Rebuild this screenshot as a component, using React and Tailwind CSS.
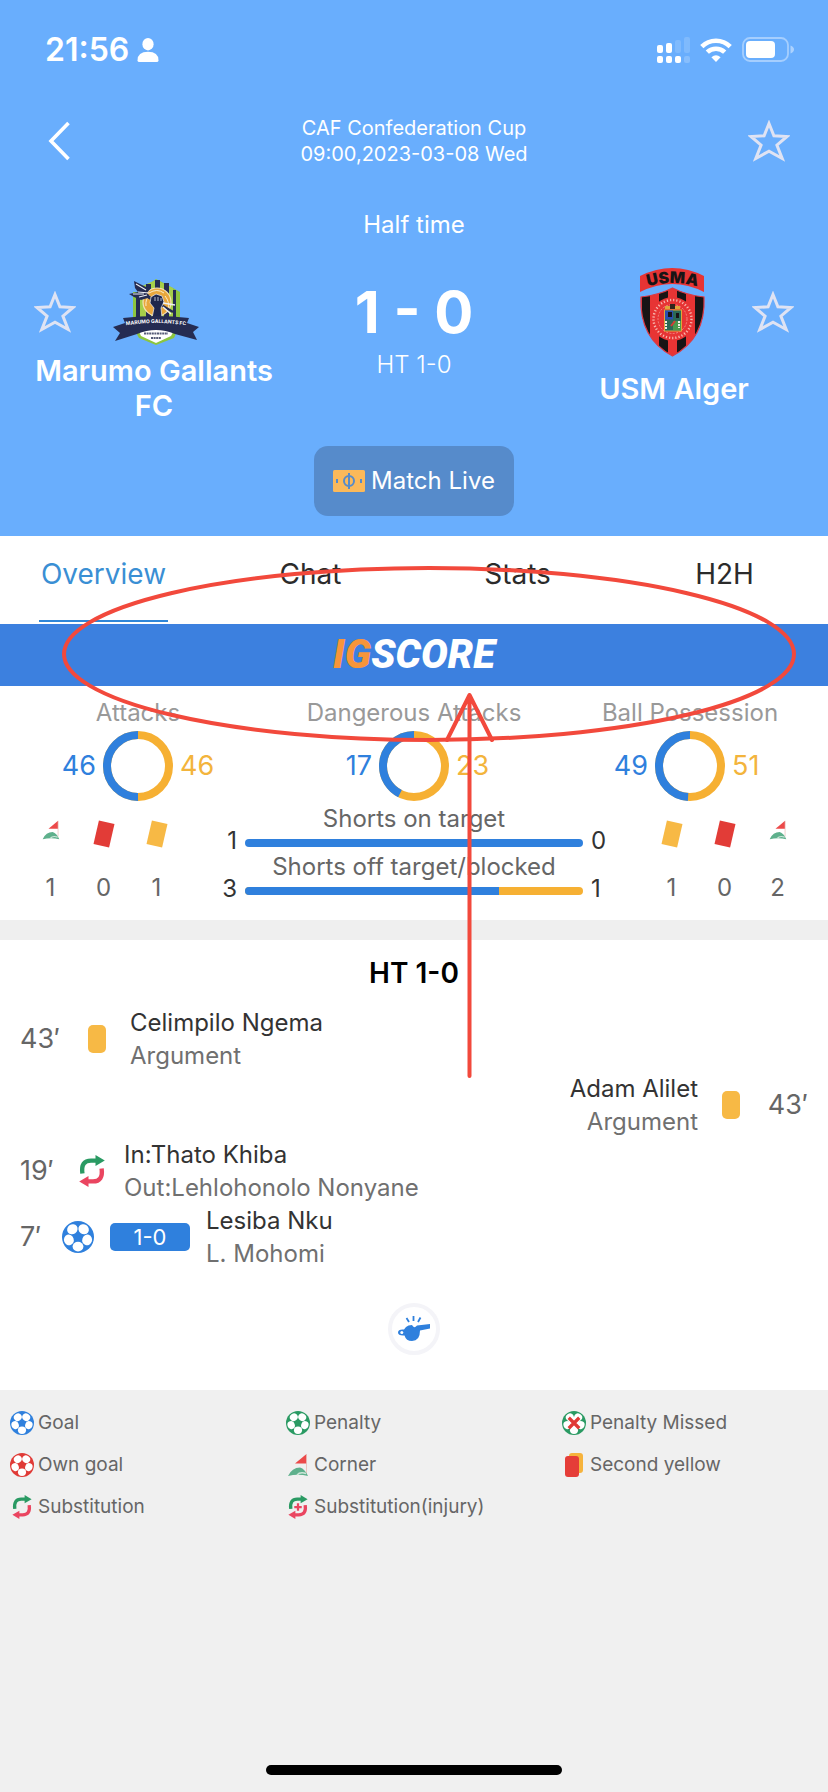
import React from "react";

const legend = [
  { icon: <Ball color="#2f80dd" />, label: "Goal" },
  { icon: <Ball color="#2a9a63" />, label: "Penalty" },
  { icon: <Ball color="#2a9a63" missed />, label: "Penalty Missed" },
  { icon: <Ball color="#e03a36" />, label: "Own goal" },
  { icon: <CornerFlag />, label: "Corner" },
  { icon: <SecondYellow />, label: "Second yellow" },
  { icon: <Substitution />, label: "Substitution" },
  { icon: <Substitution injury />, label: "Substitution(injury)" },
];

function Ball({ color, missed = false }) {
  return (
    <svg viewBox="0 0 32 32" className="h-full w-full" aria-hidden="true">
      <circle cx="16" cy="16" r="16" fill={color} />
      {[18, 90, 162, 234, 306].map((angle) => (
        <ellipse key={angle} cx="25.600" cy="16" rx="4.900" ry="5.400" fill="#fff" transform={`rotate(${angle} 16 16)`} />
      ))}
      {missed && (
        <>
          <circle cx="16" cy="16" r="8" fill="#fff" />
          <path d="M9 9 L23 23 M23 9 L9 23" stroke="#e03a36" strokeWidth="4.4" />
        </>
      )}
    </svg>
  );
}

function Substitution({ injury = false }) {
  return (
    <svg viewBox="0 0 32 32" className="h-full w-full" aria-hidden="true">
      <path d="M6.400 18.500 Q4.600 5.600 15 5.600 H20.500" fill="none" stroke="#2a9a63" strokeWidth="4.400" />
      <path d="M19.500 0 L28.800 5.600 L19.500 11 Z" fill="#2a9a63" />
      <path d="M25.600 13.500 Q27.400 26.400 17 26.400 H11.500" fill="none" stroke="#ea4560" strokeWidth="4.400" />
      <path d="M12.500 21 L3.200 26.400 L12.500 32 Z" fill="#ea4560" />
      {injury && <path d="M16 11 V21 M11 16 H21" stroke="#ea4560" strokeWidth="3" />}
    </svg>
  );
}

function CornerFlag() {
  return (
    <svg viewBox="0 0 24 24" className="h-full w-full" aria-hidden="true">
      <path d="M20.500 1 V10.500 H9 Z" fill="#ec4a4a" />
      <path d="M20.500 1 V20" stroke="#e9b9b4" strokeWidth="0.800" />
      <path d="M2 23 Q6 14.500 14 14.500 Q19 16 22 23 Q12 20.500 2 23 Z" fill="#5eb08c" />
      <path d="M11 22 Q14 18.500 20 20.500" fill="none" stroke="#cfe6da" strokeWidth="1.400" />
    </svg>
  );
}

function SecondYellow() {
  return (
    <svg viewBox="0 0 24 24" className="h-full w-full" aria-hidden="true">
      <rect x="7" y="0" width="14" height="20" rx="3" fill="#f6b33c" />
      <rect x="3" y="3" width="14" height="21" rx="3" fill="#e53d38" />
    </svg>
  );
}

function Star() {
  return (
    <svg viewBox="0 0 42 42" className="size-[42px]" aria-hidden="true">
      <path
        d="M21 3.500 L25.900 15.800 L39 16.500 L28.900 25.100 L34.200 38.500 L21 31.200 L7.800 38.500 L13.100 25.100 L3 16.500 L16.100 15.800 Z"
        fill="none"
        stroke="#dfe3f3"
        strokeWidth="3"
      />
    </svg>
  );
}

function StatusBar() {
  return (
    <div className="flex h-[100px] items-center justify-between pr-[34px] pl-[45px]">
      <div className="flex items-center gap-2 text-[32px] leading-9 font-semibold">
        <span>21:56</span>
        <svg viewBox="0 0 22 24" className="h-6 w-[22px]" fill="#fff" aria-hidden="true">
          <ellipse cx="11" cy="6.2" rx="5.6" ry="6.2" />
          <path d="M0.5 22.5 Q0.5 13.8 11 13.8 Q21.5 13.8 21.5 22.5 Q21.5 24 19.5 24 H2.5 Q0.5 24 0.5 22.5 Z" />
        </svg>
      </div>
      <div className="flex items-center gap-[10px]">
        <svg viewBox="0 0 34 28" className="h-7 w-[34px]" fill="#fff" aria-hidden="true">
          <rect x="1" y="9" width="6" height="8" rx="2" />
          <rect x="10" y="7" width="6" height="10" rx="2" />
          <rect x="19" y="4" width="6" height="13" rx="2" opacity="0.15" />
          <rect x="28" y="1" width="6" height="16" rx="2" opacity="0.15" />
          <rect x="1" y="20" width="6" height="7" rx="2" />
          <rect x="10" y="20" width="6" height="7" rx="2" />
          <rect x="19" y="20" width="6" height="7" rx="2" />
          <rect x="28" y="20" width="6" height="7" rx="2" opacity="0.2" />
        </svg>
        <svg viewBox="0 0 32 24" className="h-6 w-8" aria-hidden="true">
          <g fill="none" stroke="#fff" strokeWidth="4.6">
            <path d="M1.8 8.6 A20 20 0 0 1 30.2 8.6" />
            <path d="M7.3 14.2 A12.5 12.5 0 0 1 24.7 14.2" />
          </g>
          <path d="M16 24 L11.4 19.3 Q16 15.2 20.6 19.3 Z" fill="#fff" />
        </svg>
        <svg viewBox="0 0 52 26" className="h-[26px] w-[52px]" aria-hidden="true">
          <rect x="1" y="1" width="45" height="23" rx="7" fill="none" stroke="#fff" strokeWidth="1.8" opacity="0.4" />
          <rect x="4" y="4" width="29" height="17" rx="4" fill="#fff" />
          <path d="M48.5 8.5 Q52 10 52 12.5 Q52 15 48.5 16.5 Z" fill="#fff" opacity="0.45" />
        </svg>
      </div>
    </div>
  );
}

function MarumoCrest() {
  return (
    <svg viewBox="0 0 86 72" className="h-[72px] w-[86px]" role="img" aria-label="Marumo Gallants FC crest">
      <path d="M20 16 H26 L43 3 L60 12 L67 16 V46 H20 Z" fill="#8cc63f" />
      <path d="M29 10 L43 4 L60 12 V46 H26 V14 Z" fill="#a6cf4a" />
      <path d="M33 8 h5 v38 h-5 z M42 4 h5 v42 h-5 z M51 7 h5 v39 h-5 z M60 14 h3 v32 h-3 z M23 22 h4 v22 h-4 z" fill="#252c52" />
      <circle cx="44" cy="26" r="14" fill="#e9a73c" stroke="#f4e3b8" strokeWidth="1.2" />
      <path d="M36 17 q8 -5 15 0 M33 30 q-1 -7 4 -11 M52 20 q5 6 3 13" fill="none" stroke="#fbeecb" strokeWidth="1" />
      <path d="M33 20 L60 36" stroke="#252c52" strokeWidth="2.4" />
      <path d="M21 5 L37 13 L34 17 L38 21 L28 24 L21 21 L16 18 L25 16 L22 12 Z" fill="#252c52" />
      <path d="M23 8 L33 14 M20 18 L31 18 M26 21 L34 19 M25 16 L36 17" stroke="#eef0f5" strokeWidth="1.1" />
      <path d="M38 21 L43 18 L49 20 L51 26 L48 32 L49 42 H39 L41 32 L37 27 Z" fill="#1f274c" stroke="#eef0f5" strokeWidth="0.7" />
      <path d="M42 21 v4 M45 21 v4 M48 22 v3" stroke="#dfe3ee" strokeWidth="0.8" />
      <path d="M50 27 L62 29 M50 31 L58 38" stroke="#eef0f5" strokeWidth="1.4" />
      <path d="M21 53 H65 L61 62 L43 69 L26 62 Z" fill="#8cc63f" />
      <path d="M25 53 H62 L58 60 L43 67 L28 60 Z" fill="#fff" />
      <path d="M0 51 L12 47 L10 42 Q43 38 76 42 L74 47 L86 51 L80 56 L84 64 L62 58 Q43 50 24 58 L2 65 L7 57 Z" fill="#252c52" />
      <path id="marumo-ribbon" d="M4 51 Q43 43 82 51" fill="none" />
      <text fill="#fff" className="font-['Inter',sans-serif] text-[5px] font-bold" textAnchor="middle">
        <textPath href="#marumo-ribbon" startOffset="50%">MARUMO GALLANTS FC</textPath>
      </text>
      <path d="M31 57.500 H55 M38 62 H48" stroke="#555b77" strokeWidth="1.8" strokeDasharray="2 0.6" />
    </svg>
  );
}

function UsmaCrest() {
  return (
    <svg viewBox="0 0 86 88" className="h-[88px] w-[86px] overflow-visible" role="img" aria-label="USM Alger crest">
      <defs>
        <clipPath id="usma-shield">
          <path d="M12 29 Q30 27 43.500 20 Q57 27 75 29 Q77 70 43.500 88 Q10 70 12 29 Z" />
        </clipPath>
        <path id="usma-arc" d="M4 24 Q43.500 6 83 24" />
      </defs>
      <path d="M11 8 Q43.500 -8 75 8 V24 Q43.500 8 11 24 Z" fill="#e73434" />
      <text fill="#181415" className="font-['Inter',sans-serif] text-[16px] font-black" textAnchor="middle">
        <textPath href="#usma-arc" startOffset="50%">USMA</textPath>
      </text>
      <g clipPath="url(#usma-shield)">
        <rect x="8" y="18" width="70" height="70" fill="#e73434" />
        <path d="M13 18 h8 v70 h-8 z M30 18 h9 v70 h-9 z M48 18 h9 v70 h-9 z M66 18 h9 v70 h-9 z" fill="#181415" />
      </g>
      <path d="M12 29 Q30 27 43.500 20 Q57 27 75 29 Q77 70 43.500 88 Q10 70 12 29 Z" fill="none" stroke="#d93a45" strokeWidth="1.2" />
      <circle cx="43.500" cy="51" r="22" fill="#e73434" />
      <circle cx="43.500" cy="51" r="19" fill="none" stroke="#f7b9b0" strokeWidth="2.400" strokeDasharray="1.200 2" />
      <circle cx="43.500" cy="51" r="14.500" fill="none" stroke="#f7b9b0" strokeWidth="0.600" strokeDasharray="2 1.4" />
      <rect x="35.500" y="42" width="17" height="21" fill="#2b6a55" stroke="#e0a63a" strokeWidth="1" />
      <path d="M36 42.500 h8 v9 h-8 z" fill="#2a4fb0" />
      <path d="M44 53 h8 v9 h-8 z" fill="#4b9a4c" />
      <path d="M39 44 h4 v5 h-4 z M47 45 h3 v5 h-3 z" fill="#181415" />
      <path d="M37 53 v8 M50 53 v7" stroke="#f3efe2" strokeWidth="2" strokeDasharray="2 1" />
      <path d="M42 58 l4 -5" stroke="#d83a34" strokeWidth="2" />
      <path d="M36 38 h15 v3 h-15 z" fill="#e0a63a" />
      <path d="M41 36 h5 v5 h-5 z" fill="#33241c" />
    </svg>
  );
}

function Ring({ label, home, away }) {
  const share = (home / (home + away)) * 100;
  return (
    <div className="flex flex-col items-center">
      <div className="text-2xl leading-[30px] whitespace-nowrap text-[#999]">{label}</div>
      <div className="mt-[3px] flex items-center gap-[7px] text-[27px] leading-8">
        <span className="w-10 text-right text-[#2f80dd]">{home}</span>
        <svg viewBox="0 0 70 70" className="size-[70px]" aria-hidden="true">
          <circle cx="35" cy="35" r="31" fill="none" stroke="#f6b033" strokeWidth="8" />
          <circle
            cx="35"
            cy="35"
            r="31"
            fill="none"
            stroke="#2f80dd"
            strokeWidth="8"
            pathLength="100"
            strokeDasharray={`${share} 100`}
            transform="matrix(0 -1 -1 0 70 70)"
          />
        </svg>
        <span className="w-10 text-[#f3b43c]">{away}</span>
      </div>
    </div>
  );
}

function Tally({ items }) {
  return (
    <div className="grid grid-cols-3 text-center text-2xl leading-8 text-[#666]">
      {items.map(([kind, count]) => (
        <div key={kind} className="flex flex-col items-center gap-6">
          <div className="flex h-7 items-center justify-center">
            {kind === "corner" && (
              <div className="mb-2 size-5">
                <CornerFlag />
              </div>
            )}
            {kind === "red" && <div className="h-6 w-4 rotate-13 bg-[#e23c37]" />}
            {kind === "yellow" && <div className="h-6 w-4 rotate-13 bg-[#f7b945]" />}
          </div>
          <div>{count}</div>
        </div>
      ))}
    </div>
  );
}

function ShotBar({ label, home, away }) {
  return (
    <div className="grid grid-cols-[24px_1fr_24px] gap-x-2 text-2xl">
      <div className="col-start-2 h-[30px] text-center leading-[30px] whitespace-nowrap text-[#666]">{label}</div>
      <div className="col-start-1 -mt-1 h-[22px] text-right leading-[22px] text-[#333]">{home}</div>
      <div className="mt-[5px] flex h-2 overflow-hidden rounded-full bg-[#f6b033]">
        <div className="bg-[#2f80dd]" style={{ width: `${(home / (home + away)) * 100}%` }} />
      </div>
      <div className="-mt-1 h-[22px] leading-[22px] text-[#333]">{away}</div>
    </div>
  );
}

function EventText({ title, detail }) {
  return (
    <div className="text-2xl leading-[33px]">
      <div className="text-[#333]">{title}</div>
      <div className="text-[#707070]">{detail}</div>
    </div>
  );
}

const minute = "text-[27px] leading-8 text-[#666]";
const card = "h-7 w-[18px] rounded-[5px] bg-[#f7b945]";

export default function App() {
  return (
    <div className="relative flex min-h-screen flex-col overflow-hidden bg-[#f0f0f0] font-['Inter','Liberation_Sans',sans-serif]">
      <header className="bg-[#69aefd] pb-5 text-white">
        <StatusBar />
        <div className="grid grid-cols-[1fr_auto_1fr] items-center px-[38px] pt-[15px]">
          <button type="button" aria-label="Back" className="justify-self-start pl-2">
            <svg viewBox="0 0 24 40" className="h-10 w-6" fill="none" stroke="#fff" strokeWidth="3.6" aria-hidden="true">
              <path d="M22.500 2 L5 20 L22.500 38" />
            </svg>
          </button>
          <div className="text-center text-xl leading-[26px]">
            <h1>CAF Confederation Cup</h1>
            <p>09:00,2023-03-08 Wed</p>
          </div>
          <button type="button" aria-label="Favourite match" className="justify-self-end">
            <Star />
          </button>
        </div>
        <div className="mt-[43px] text-center text-2xl leading-[30px]">Half time</div>
        <div className="mt-7 grid h-[178px] grid-cols-[1fr_212px_1fr]">
          <div className="pt-2">
            <div className="flex items-center gap-[37px] pl-[34px]">
              <button type="button" aria-label="Favourite Marumo Gallants FC">
                <Star />
              </button>
              <MarumoCrest />
            </div>
            <div className="mx-auto mt-[5px] max-w-[260px] text-center text-[29px] leading-[35px] font-semibold">
              Marumo Gallants FC
            </div>
          </div>
          <div className="pt-2 text-center">
            <div className="text-[58px] leading-[72px] font-bold whitespace-nowrap">1 - 0</div>
            <div className="mt-[2px] text-2xl leading-[30px] font-light">HT 1-0</div>
          </div>
          <div>
            <div className="flex items-center justify-end gap-[37px] pr-[34px]">
              <UsmaCrest />
              <button type="button" aria-label="Favourite USM Alger">
                <Star />
              </button>
            </div>
            <div className="mt-[15px] text-center text-[29px] leading-[35px] font-semibold">USM Alger</div>
          </div>
        </div>
        <button
          type="button"
          className="mx-auto flex h-[70px] w-[200px] items-center justify-center gap-[6px] rounded-[14px] bg-[#568bcb] text-2xl whitespace-nowrap"
        >
          <svg viewBox="0 0 32 22" className="h-[22px] w-8" aria-hidden="true">
            <rect width="32" height="22" rx="1.500" fill="#fbb95a" />
            <circle cx="16" cy="11" r="5" fill="none" stroke="#568bcb" strokeWidth="2" />
            <path d="M16 3 V19 M4 9 V13 M28 9 V13" stroke="#568bcb" strokeWidth="2" />
          </svg>
          Match Live
        </button>
      </header>

      <main className="bg-white">
        <nav className="grid h-[88px] grid-cols-4 text-center text-[28px] leading-8 text-[#2b2b2b]">
          <a href="#overview" className="mx-auto mb-[2px] border-b-2 border-[#2f86d8] px-[2px] pt-[22px] text-[#3a8fd4]">
            Overview
          </a>
          <a href="#chat" className="pt-[22px]">Chat</a>
          <a href="#stats" className="pt-[22px]">Stats</a>
          <a href="#h2h" className="pt-[22px]">H2H</a>
        </nav>

        <a
          href="#igscore"
          className="flex h-[62px] items-center justify-center bg-[#3c80df] font-['Roboto',sans-serif] text-[40px] leading-none font-black text-white italic"
        >
          <span className="text-[#f7953a]">IG</span>SCORE
        </a>

        <section id="overview" className="h-[234px] pt-3">
          <div className="grid grid-cols-3">
            <Ring label="Attacks" home={46} away={46} />
            <Ring label="Dangerous Attacks" home={17} away={23} />
            <Ring label="Ball Possession" home={49} away={51} />
          </div>
          <div className="grid grid-cols-[159px_1fr_159px] gap-x-[30px] px-6 pt-[3px]">
            <div className="pt-4">
              <Tally items={[["corner", 1], ["red", 0], ["yellow", 1]]} />
            </div>
            <div>
              <ShotBar label="Shorts on target" home={1} away={0} />
              <ShotBar label="Shorts off target/blocked" home={3} away={1} />
            </div>
            <div className="pt-4">
              <Tally items={[["yellow", 1], ["red", 0], ["corner", 2]]} />
            </div>
          </div>
        </section>

        <div className="h-5 bg-[#efefef]" />

        <section className="pb-[35px]">
          <h2 className="pt-[17px] pb-[17px] text-center text-[28px] leading-8 font-semibold text-black">HT 1-0</h2>
          <ul>
            <li className="flex h-[66px] items-center pl-5">
              <div className={minute + " w-[68px]"}>43′</div>
              <div className={card} />
              <div className="ml-6">
                <EventText title="Celimpilo Ngema" detail="Argument" />
              </div>
            </li>
            <li className="flex h-[66px] items-center justify-end pr-5 text-right">
              <EventText title="Adam Alilet" detail="Argument" />
              <div className={card + " ml-6"} />
              <div className={minute + " w-[68px]"}>43′</div>
            </li>
            <li className="flex h-[66px] items-center pl-5">
              <div className={minute + " w-[56px]"}>19′</div>
              <div className="size-8">
                <Substitution />
              </div>
              <div className="ml-4">
                <EventText title="In:Thato Khiba" detail="Out:Lehlohonolo Nonyane" />
              </div>
            </li>
            <li className="flex h-[66px] items-center pl-5">
              <div className={minute + " w-[42px]"}>7′</div>
              <div className="size-8">
                <Ball color="#2f80dd" />
              </div>
              <div className="ml-4 h-7 w-20 rounded-[5px] bg-[#2f80dd] text-center text-[22px] leading-7 text-white">1-0</div>
              <div className="ml-4">
                <EventText title="Lesiba Nku" detail="L. Mohomi" />
              </div>
            </li>
          </ul>
          <div className="mx-auto mt-[33px] flex size-[52px] items-center justify-center rounded-full border-4 border-[#f4f4f8] bg-white">
            <svg viewBox="0 0 32 26" className="h-[26px] w-8" aria-hidden="true">
              <path d="M8 11 Q10 9 14 9 Q16 13 19 9.500 L32 8 V12.500 L22 14.500 Q22 25 14 25 Q8 25 6.500 19.500 Q0 20 0 16.500 Q0 13 6 13.500 Z" fill="#2f80dd" />
              <circle cx="3.800" cy="16.500" r="1.500" fill="#fff" />
              <path d="M8.500 2 L11 6 M15.500 0 V5 M22.500 1.500 L20 6" stroke="#2f80dd" strokeWidth="1.800" />
            </svg>
          </div>
        </section>
      </main>

      <footer className="flex flex-1 flex-col justify-between pt-3 pb-[17px]">
        <ul className="grid grid-cols-3 text-[19px] leading-[42px] text-[#666]">
          {legend.map(({ icon, label }) => (
            <li key={label} className="flex items-center gap-1 pl-[10px] whitespace-nowrap">
              <span className="size-6">{icon}</span>
              {label}
            </li>
          ))}
        </ul>
        <div className="mx-auto h-[10px] w-[296px] rounded-full bg-black" />
      </footer>

      <svg
        viewBox="0 0 828 540"
        className="pointer-events-none absolute top-[550px] left-0 w-full"
        fill="none"
        stroke="#f2493c"
        strokeWidth="4"
        strokeLinecap="round"
        strokeLinejoin="round"
        aria-hidden="true"
      >
        <ellipse cx="429" cy="104" rx="365" ry="86" />
        <path d="M469.500 526 V145 M447 190 L469.500 145 L492 190" />
      </svg>
    </div>
  );
}
